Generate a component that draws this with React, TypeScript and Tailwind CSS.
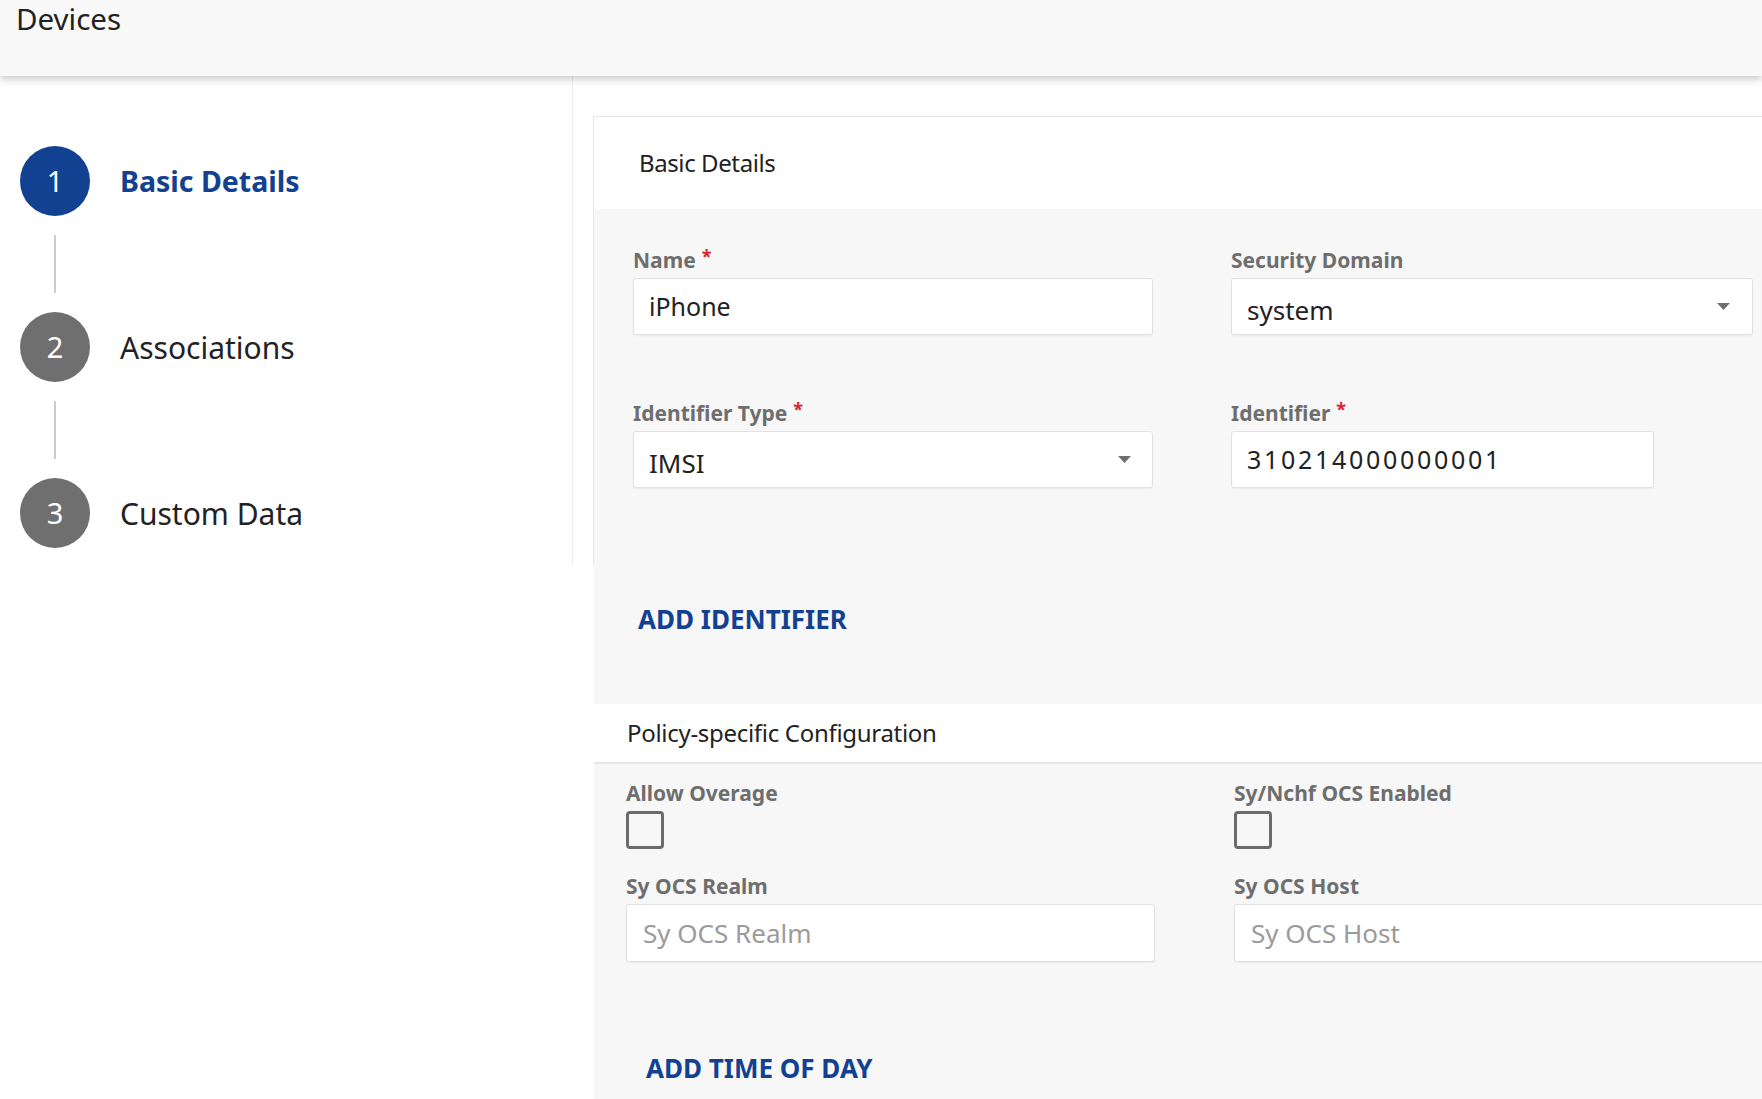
import React from 'react';

const steps = [
  { n: 1, label: 'Basic Details', active: true },
  { n: 2, label: 'Associations', active: false },
  { n: 3, label: 'Custom Data', active: false },
];

const Caret: React.FC = () => (
  <svg width="13" height="7" viewBox="0 0 13 7" className="shrink-0">
    <path d="M0 0 L13 0 L6.5 7 Z" fill="#6f6f6f" />
  </svg>
);

const Label: React.FC<{ text: string; required?: boolean }> = ({ text, required }) => (
  <div className="h-[24px] flex items-start text-[21px] leading-[24px] font-bold text-[#6e6e6e] mb-[6px] whitespace-nowrap">
    <span>{text}</span>
    {required && <span className="ml-[6px] -mt-[2px] text-[18px] leading-[20px] text-[#d9262f]">*</span>}
  </div>
);

const TextField: React.FC<{ value?: string; placeholder?: string; className?: string; textClass?: string }> = ({
  value,
  placeholder,
  className = '',
  textClass = '',
}) => (
  <div
    className={`h-[57px] bg-white border border-[#e2e2e2] rounded-[3px] shadow-[0_1px_2px_rgba(0,0,0,0.06)] flex items-center pl-[15px] ${className}`}
  >
    {value ? (
      <span className={`text-[25px] text-[#222] ${textClass}`}>{value}</span>
    ) : (
      <span className="text-[26px] text-[#9b9b9b]">{placeholder}</span>
    )}
  </div>
);

const SelectField: React.FC<{ value: string; className?: string }> = ({ value, className = '' }) => (
  <div
    className={`h-[57px] bg-white border border-[#e2e2e2] rounded-[3px] shadow-[0_1px_2px_rgba(0,0,0,0.06)] flex items-center justify-between pl-[15px] pr-[22px] ${className}`}
  >
    <span className="text-[26px] leading-[36px] text-[#222] pt-[6px]">{value}</span>
    <Caret />
  </div>
);

const Checkbox: React.FC = () => (
  <div className="w-[38px] h-[38px] rounded-[4px] border-[3px] border-[#6b6b6b]" />
);

const App: React.FC = () => {
  return (
    <div className="h-screen w-full overflow-hidden bg-white flex flex-col font-['Noto_Sans','Open_Sans',sans-serif]">
      <header className="relative z-10 h-[76px] shrink-0 bg-[#f9f9f9] shadow-[0_3px_8px_rgba(0,0,0,0.22)] px-[16px]">
        <h1 className="text-[29.5px] leading-[38px] text-[#222]">Devices</h1>
      </header>

      <div className="flex items-start flex-1 min-h-0">
        <aside className="w-[573px] shrink-0 border-r border-[#ececec] pl-[20px] pt-[70px] pb-[17px]">
          {steps.map((s, i) => (
            <div key={s.n}>
              <div className="flex items-center gap-[30px]">
                <div
                  className={`w-[70px] h-[70px] rounded-full flex items-center justify-center text-white text-[29px] ${
                    s.active ? 'bg-[#124191]' : 'bg-[#6f6f6f]'
                  }`}
                >
                  {s.n}
                </div>
                <span
                  className={s.active ? 'text-[28.5px] font-bold text-[#124191]' : 'text-[30px] text-[#222]'}
                >
                  {s.label}
                </span>
              </div>
              {i < steps.length - 1 && <div className="ml-[34px] w-[2px] h-[58px] my-[19px] bg-[#cccccc]" />}
            </div>
          ))}
        </aside>

        <main className="flex-1 min-w-0 pt-[40px]">
          {/* Basic details card */}
          <section className="ml-[20px] border-l border-t border-[#e6e6e6]">
            <div className="h-[92px] bg-white flex items-center pl-[45px]">
              <h2 className="text-[24px] tracking-[-0.4px] text-[#222]">Basic Details</h2>
            </div>
            <div className="bg-[#f7f7f7] pt-[39px] pb-[78px] pl-[39px] grid grid-cols-[520px_522px] gap-x-[78px] gap-y-[66px]">
              <div>
                <Label text="Name" required />
                <TextField value="iPhone" />
              </div>
              <div>
                <Label text="Security Domain" />
                <SelectField value="system" />
              </div>
              <div>
                <Label text="Identifier Type" required />
                <SelectField value="IMSI" className="!pr-[21px]" />
              </div>
              <div>
                <Label text="Identifier" required />
                <TextField value="310214000000001" className="w-[423px]" textClass="tracking-[2.7px]" />
              </div>
            </div>
          </section>

          <div className="ml-[21px] h-[138px] bg-[#f7f7f7] pt-[37px] pl-[44px]">
            <button className="text-[26px] leading-[32px] font-bold text-[#124191]">ADD IDENTIFIER</button>
          </div>

          {/* Policy config */}
          <section className="ml-[21px]">
            <div className="h-[60px] bg-white border-b-2 border-[#e6e6e6] flex items-center pl-[33px]">
              <h2 className="text-[24px] tracking-[-0.3px] text-[#222]">Policy-specific Configuration</h2>
            </div>
            <div className="bg-[#f7f7f7] pt-[17px] pl-[32px] pb-[80px]">
              <div className="grid grid-cols-[529px_560px] gap-x-[79px] gap-y-[25px]">
                <div>
                  <Label text="Allow Overage" />
                  <Checkbox />
                </div>
                <div>
                  <Label text="Sy/Nchf OCS Enabled" />
                  <Checkbox />
                </div>
                <div>
                  <Label text="Sy OCS Realm" />
                  <TextField placeholder="Sy OCS Realm" className="!h-[58px] !pl-[16px]" />
                </div>
                <div>
                  <Label text="Sy OCS Host" />
                  <TextField placeholder="Sy OCS Host" className="!h-[58px] !pl-[16px]" />
                </div>
              </div>
              <button className="mt-[90px] ml-[20px] text-[26px] leading-[32px] font-bold text-[#124191]">
                ADD TIME OF DAY
              </button>
            </div>
          </section>
        </main>
      </div>
    </div>
  );
};

export default App;
